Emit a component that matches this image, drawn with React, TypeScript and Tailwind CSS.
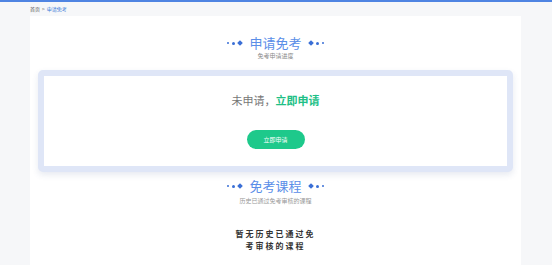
import React from "react";

const Deco = ({ side }: { side: "l" | "r" }) => {
  const dots = [
    <span key="a" className="w-[2px] h-[2px] rounded-full bg-[#3a6fd6]" />,
    <span key="b" className="w-[3px] h-[3px] rounded-full bg-[#3a6fd6]" />,
    <span key="c" className="w-[4px] h-[4px] rotate-45 bg-[#3a6fd6]" />,
  ];
  return (
    <div className="flex items-center gap-[3px]">
      {side === "l" ? dots : [...dots].reverse()}
    </div>
  );
};

const Title = ({ text }: { text: string }) => (
  <div className="flex items-center justify-center gap-[7px] h-[14px]">
    <Deco side="l" />
    <span className="text-[13px] leading-[14px] text-[#5a8ee8]">{text}</span>
    <Deco side="r" />
  </div>
);

export default function App() {
  return (
    <div
      className="w-full h-[265px] bg-[#f6f7f9] overflow-hidden"
      style={{ fontFamily: '"Noto Sans CJK SC", "Noto Sans", sans-serif' }}
    >
      <div className="h-[2px] bg-[#4f84e2]" />
      <div className="h-[14px] pl-[30px] flex items-center text-[5px] leading-[6px]">
        <span className="text-[#555]">首页</span>
        <span className="text-[#555] mx-[2px]">&gt;</span>
        <span className="text-[#3a78d8]">申请免考</span>
      </div>
      <div className="ml-[30px] w-[491px] h-[260px] bg-white pt-[20px]">
        <Title text="申请免考" />
        <div className="text-center text-[6px] leading-[8px] text-[#888] mt-[2px]">免考申请进度</div>
        <div className="mt-[10px] ml-[8px] w-[475px] border-[6px] border-[#dfe6f7] rounded-[5px] bg-white shadow-[0_3px_6px_rgba(60,80,140,0.12)]">
          <div className="h-[90px] flex flex-col items-center pt-[17px]">
            <div className="text-[11px] leading-[14px]">
              <span className="text-[#777]">未申请，</span>
              <span className="text-[#21bf86] font-semibold">立即申请</span>
            </div>
            <button className="mt-[23px] w-[58px] h-[19px] rounded-full bg-[#1ec98b] text-white text-[6px] leading-[8px]">
              立即申请
            </button>
          </div>
        </div>
        <div className="mt-[7px]">
          <Title text="免考课程" />
        </div>
        <div className="text-center text-[6px] leading-[8px] text-[#999] mt-[4px]">历史已通过免考审核的课程</div>
        <div className="mx-auto mt-[23px] w-[86px] text-center text-[8px] leading-[12px] font-bold tracking-[2px] text-[#333]">
          暂无历史已通过免考审核的课程
        </div>
      </div>
    </div>
  );
}
